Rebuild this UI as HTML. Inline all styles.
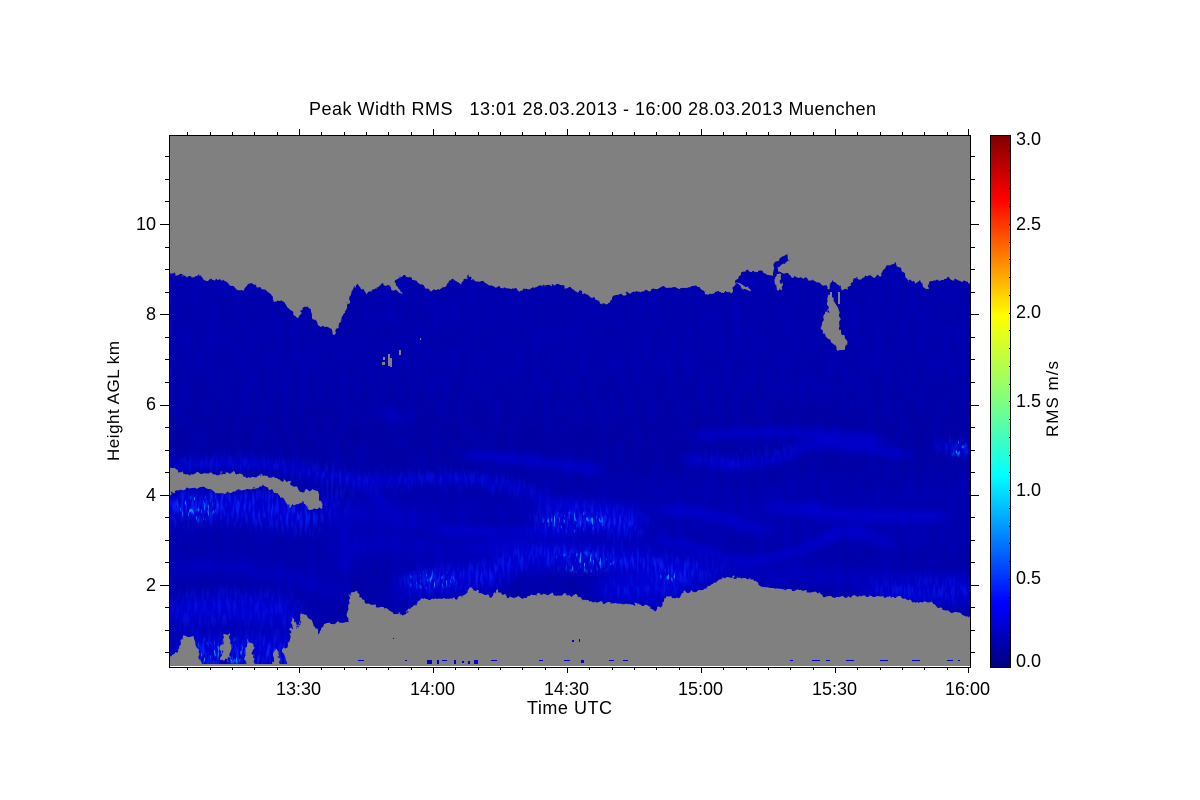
<!DOCTYPE html>
<html>
<head>
<meta charset="utf-8">
<title>Peak Width RMS</title>
<style>
html,body{margin:0;padding:0;background:#fff;width:1200px;height:800px;overflow:hidden}
svg{display:block}
text{font-family:"Liberation Sans",sans-serif;font-size:18px;fill:#000;white-space:pre}
</style>
</head>
<body>
<svg width="1200" height="800" viewBox="0 0 1200 800" xmlns="http://www.w3.org/2000/svg">
<defs>
<linearGradient id="base" x1="0" y1="263" x2="0" y2="666" gradientUnits="userSpaceOnUse">
<stop offset="0" stop-color="#0000ac"/>
<stop offset="0.25" stop-color="#0000aa"/>
<stop offset="0.42" stop-color="#0000a2"/>
<stop offset="0.5" stop-color="#0000a4"/>
<stop offset="0.62" stop-color="#0000b0"/>
<stop offset="0.72" stop-color="#0000a8"/>
<stop offset="0.8" stop-color="#0000a6"/>
<stop offset="1" stop-color="#0000b0"/>
</linearGradient>
<linearGradient id="jet" x1="0" y1="667" x2="0" y2="135" gradientUnits="userSpaceOnUse">
<stop offset="0" stop-color="#00007f"/>
<stop offset="0.12" stop-color="#0000ff"/>
<stop offset="0.36" stop-color="#00ffff"/>
<stop offset="0.5" stop-color="#7fff7f"/>
<stop offset="0.66" stop-color="#ffff00"/>
<stop offset="0.88" stop-color="#ff0000"/>
<stop offset="1" stop-color="#7f0000"/>
</linearGradient>
<filter id="b3" x="-20%" y="-150%" width="140%" height="400%"><feGaussianBlur stdDeviation="7 4"/></filter>
<filter id="b6" x="-20%" y="-60%" width="140%" height="220%"><feGaussianBlur stdDeviation="9 7"/></filter>
<filter id="b2" x="-50%" y="-50%" width="200%" height="200%"><feGaussianBlur stdDeviation="3 2"/></filter>
<filter id="tex" x="0" y="0" width="100%" height="100%" color-interpolation-filters="sRGB">
<feTurbulence type="fractalNoise" baseFrequency="0.12 0.04" numOctaves="2" seed="7"/>
<feColorMatrix type="matrix" values="0 0 0 0 0  0 0 0 0 0  0 0 0 0 0.95  2.5 0 0 0 -1"/>
</filter>
<filter id="tex2" x="0" y="0" width="100%" height="100%" color-interpolation-filters="sRGB">
<feTurbulence type="fractalNoise" baseFrequency="0.38 0.07" numOctaves="2" seed="11"/>
<feColorMatrix type="matrix" values="0 0 0 0 0.04  0 0 0 0 0.16  0 0 0 0 1  4 0 0 0 -1.8"/>
</filter>
<filter id="tex3" x="0" y="0" width="100%" height="100%" color-interpolation-filters="sRGB">
<feTurbulence type="fractalNoise" baseFrequency="0.5 0.12" numOctaves="2" seed="23"/>
<feColorMatrix type="matrix" values="0 0 0 0 0.05  0 0 0 0 0.6  0 0 0 0 1  8 0 0 0 -4.9"/>
</filter>
<filter id="jag" x="-2%" y="-10%" width="104%" height="120%" color-interpolation-filters="sRGB">
<feTurbulence type="fractalNoise" baseFrequency="0.22 0.18" numOctaves="2" seed="4" result="n"/>
<feDisplacementMap in="SourceGraphic" in2="n" scale="7" xChannelSelector="R" yChannelSelector="G"/>
</filter>
<clipPath id="plot"><rect x="169" y="135" width="801" height="531"/></clipPath>
<mask id="m1" maskUnits="userSpaceOnUse" x="169" y="250" width="801" height="420">
<g fill="none" stroke="#fff" stroke-linecap="round" filter="url(#b6)">
<path stroke-width="30" stroke-opacity=".75" d="M172 508C210 502 250 505 310 515"/>
<path stroke-width="36" stroke-opacity=".32" d="M185 610C210 606 250 606 285 612"/>
<path stroke-width="26" stroke-opacity=".85" d="M195 654L285 654"/>
<path stroke-width="10" stroke-opacity=".45" d="M169 465C220 462 270 460 310 472S400 480 440 478 520 488 540 494"/>
<path stroke-width="16" stroke-opacity=".85" d="M412 585C440 578 480 578 495 572"/>
<path stroke-width="14" stroke-opacity=".85" d="M505 560C540 555 590 555 640 562S690 575 700 570"/>
<path stroke-width="20" stroke-opacity=".85" d="M545 520C575 515 600 515 630 525"/>
<path stroke-width="12" stroke-opacity=".6" d="M610 590C630 590 650 590 680 585"/>
<path stroke-width="9" stroke-opacity=".6" d="M662 575L720 568"/>
<path stroke-width="16" stroke-opacity=".55" d="M880 590L970 590"/>
<path stroke-width="10" stroke-opacity=".8" d="M945 445L970 452"/>
<path stroke-width="8" stroke-opacity=".4" d="M700 458C720 462 740 464 800 448"/>
<path stroke-width="14" stroke-opacity=".4" d="M330 470L345 510"/>
</g>
</mask>
<mask id="m2" maskUnits="userSpaceOnUse" x="169" y="250" width="801" height="420">
<g fill="#fff" filter="url(#b2)">
<ellipse cx="198" cy="508" rx="20" ry="12"/>
<ellipse cx="430" cy="580" rx="24" ry="8"/>
<ellipse cx="575" cy="522" rx="32" ry="9"/>
<ellipse cx="582" cy="562" rx="32" ry="9"/>
<ellipse cx="208" cy="652" rx="10" ry="12"/>
<ellipse cx="232" cy="652" rx="14" ry="12"/>
<ellipse cx="958" cy="448" rx="8" ry="8"/>
<ellipse cx="668" cy="576" rx="10" ry="5"/>
</g>
</mask>
</defs>

<rect x="169" y="135" width="801" height="531" fill="#808080"/>

<g clip-path="url(#plot)">
<rect x="169" y="250" width="801" height="420" fill="url(#base)"/>
<g fill="none" stroke-linecap="round">
<g filter="url(#b3)" stroke="#0000d4" stroke-width="7">
<path d="M169 465C220 462 270 460 310 472S400 480 440 478 520 488 540 494"/>
<path d="M440 530C480 532 520 535 560 530S610 512 640 520"/>
<path d="M690 458C710 462 730 466 745 464S790 458 800 448 880 450 905 455"/>
<path d="M770 505C785 510 800 512 815 505"/>
<path d="M810 512C850 516 890 518 940 516"/>
<path d="M660 510C700 508 730 520 765 532"/>
<path d="M660 540C690 545 710 552 730 560S800 552 830 536 870 540 890 544"/>
<path d="M660 578C680 574 700 572 720 568"/>
<path d="M940 590C950 590 960 590 970 588"/>
<path d="M940 445C950 448 960 450 970 452"/>
<path d="M540 500C570 505 600 512 630 510"/>
<path d="M470 550C500 540 530 545 560 555"/>
<path d="M345 475C365 485 385 505 400 520"/>
<path d="M385 410L398 420"/>
<path d="M700 436C760 430 820 432 880 440"/>
<path d="M470 455C520 458 560 465 600 470"/>
<path d="M320 495C340 515 350 540 345 570"/>
</g>
<g filter="url(#b6)" stroke="#0000d0" stroke-width="26">
<path d="M172 506C210 502 250 505 300 515"/>
<path d="M180 612C210 606 250 606 285 612"/>
<path d="M410 585C440 578 480 578 500 570"/>
<path d="M505 560C540 555 590 555 640 562S690 575 700 570"/>
<path d="M550 520C575 515 600 515 630 525"/>
<path d="M610 590C630 590 650 590 680 585"/>
<path d="M190 648L285 648"/>
<path d="M880 592L965 590"/>
</g>
<g filter="url(#b6)" stroke="#0000c0" stroke-width="14">
<path d="M169 570C230 560 280 570 340 590"/>
<path d="M300 505C340 512 380 520 430 520"/>
<path d="M340 550C380 540 420 545 460 555"/>
<path d="M700 575C760 572 830 575 900 582 940 585 960 590 970 592"/>
</g>
</g>
<rect x="169" y="250" width="801" height="420" fill="#fff" filter="url(#tex)" opacity=".16"/>
<rect x="169" y="250" width="801" height="420" filter="url(#tex2)" mask="url(#m1)"/>
<rect x="169" y="250" width="801" height="420" filter="url(#tex3)" mask="url(#m2)"/>

<g fill="#808080" filter="url(#jag)">
<polygon points="150,120 990,120 990,283 970,283 967,282 950,278 930,282 927,290 920,282 908,282 903,272 895,264 887,265 880,276 867,277 853,279 848,290 840,288 833,279 828,288 820,283 810,279 800,278 780,273 778,267 790,259 788,253 775,263 773,275 768,273 758,271 742,272 735,282 733,293 717,292 707,295 700,287 660,288 635,292 615,296 605,305 590,296 575,290 555,284 520,290 498,287 483,283 468,276 462,283 450,280 440,290 430,291 417,282 403,274 395,282 402,294 395,290 383,284 373,291 366,293 358,284 352,290 347,307 335,335 327,326 322,327 313,318 308,306 303,310 297,318 283,301 275,301 268,291 250,284 240,292 228,282 213,278 207,282 200,275 187,277 175,275 169,273 150,273"/>
<polygon points="990,617 970,617 937,608 933,603 913,602 900,597 893,598 860,595 833,598 817,593 793,590 763,587 752,579 723,577 713,584 703,590 683,592 680,597 667,598 660,607 655,611 647,605 613,604 583,600 577,595 532,594 527,598 508,597 498,591 490,597 480,593 470,587 463,597 447,599 422,599 413,607 400,615 380,607 365,603 357,590 350,593 347,622 337,623 323,625 320,635 313,623 302,613 298,627 292,617 290,640 283,650 287,664 287,690 990,690"/>
<polygon points="150,468 169,468 190,475 205,472 218,475 222,472 233,473 250,478 263,475 290,482 300,492 317,489 323,507 310,509 303,502 290,507 277,493 263,485 257,488 230,492 217,493 203,487 183,489 169,495 150,495"/>
<polygon points="828,295 834,300 838,308 840,330 848,343 845,350 837,350 835,345 825,335 820,328 827,312"/>
<polygon points="150,690 150,660 170,657 178,650 183,636 192,636 197,647 202,666 202,690"/>
<polygon points="221,652 224,634 229,634 231,652 228,660 223,660"/>
<polygon points="245,668 246,645 249,640 253,645 254,668"/>
<polygon points="273,668 275,648 278,650 280,668"/>
<polygon points="775,276 777,290 782,290 780,275"/>
<polygon points="735,283 748,286 750,292 743,289"/>
</g>
<g fill="#808080" shape-rendering="crispEdges">
<rect x="169" y="664" width="120" height="2"/>
<rect x="388" y="354" width="2" height="12"/><rect x="390" y="358" width="2" height="9"/><rect x="383" y="357" width="2" height="3"/><rect x="382" y="362" width="3" height="3"/><rect x="399" y="350" width="2" height="5"/><rect x="420" y="338" width="1" height="2"/>
<rect x="838" y="292" width="2" height="12"/><rect x="830" y="292" width="2" height="5"/>
</g>
</g>

<g fill="#0000c8" shape-rendering="crispEdges">
<rect x="427" y="660" width="5" height="4"/><rect x="437" y="660" width="2" height="4"/><rect x="442" y="660" width="5" height="1"/><rect x="454" y="660" width="2" height="4"/><rect x="462" y="661" width="2" height="2"/><rect x="468" y="661" width="2" height="3"/><rect x="474" y="660" width="4" height="4"/><rect x="491" y="660" width="6" height="1"/><rect x="539" y="660" width="4" height="1"/><rect x="564" y="660" width="6" height="1"/><rect x="581" y="660" width="3" height="3"/><rect x="609" y="660" width="5" height="1"/><rect x="623" y="660" width="5" height="1"/><rect x="358" y="660" width="6" height="1"/><rect x="405" y="660" width="2" height="1"/><rect x="572" y="640" width="2" height="2"/><rect x="579" y="639" width="1" height="3"/><rect x="393" y="638" width="1" height="1"/><rect x="790" y="660" width="3" height="1"/><rect x="812" y="660" width="8" height="1"/><rect x="826" y="660" width="4" height="1"/><rect x="846" y="660" width="8" height="1"/><rect x="880" y="660" width="8" height="1"/><rect x="912" y="660" width="8" height="1"/><rect x="947" y="660" width="6" height="1"/><rect x="958" y="660" width="2" height="1"/>
</g>

<g stroke="#000" fill="none" stroke-width="1" shape-rendering="crispEdges">
<path d="M169.500 135.500H970.500V667.500H169.500Z"/>
<path d="M187.500 135v-3M210.500 135v-3M232.500 135v-3M254.500 135v-3M277.500 135v-3M299.500 135v-6M321.500 135v-3M344.500 135v-3M366.500 135v-3M388.500 135v-3M411.500 135v-3M433.500 135v-6M455.500 135v-3M478.500 135v-3M500.500 135v-3M522.500 135v-3M545.500 135v-3M567.500 135v-6M589.500 135v-3M612.500 135v-3M634.500 135v-3M656.500 135v-3M679.500 135v-3M701.500 135v-6M723.500 135v-3M746.500 135v-3M768.500 135v-3M790.500 135v-3M813.500 135v-3M835.500 135v-6M857.500 135v-3M880.500 135v-3M902.500 135v-3M924.500 135v-3M947.500 135v-3M968.500 135v-6"/>
<path d="M187.500 667v3M210.500 667v3M232.500 667v3M254.500 667v3M277.500 667v3M299.500 667v6M321.500 667v3M344.500 667v3M366.500 667v3M388.500 667v3M411.500 667v3M433.500 667v6M455.500 667v3M478.500 667v3M500.500 667v3M522.500 667v3M545.500 667v3M567.500 667v6M589.500 667v3M612.500 667v3M634.500 667v3M656.500 667v3M679.500 667v3M701.500 667v6M723.500 667v3M746.500 667v3M768.500 667v3M790.500 667v3M813.500 667v3M835.500 667v6M857.500 667v3M880.500 667v3M902.500 667v3M924.500 667v3M947.500 667v3M968.500 667v6"/>
<path d="M169 156.500h-4M169 179.500h-4M169 201.500h-4M169 224.500h-9M169 247.500h-4M169 269.500h-4M169 292.500h-4M169 314.500h-9M169 337.500h-4M169 359.500h-4M169 382.500h-4M169 405.500h-9M169 427.500h-4M169 450.500h-4M169 472.500h-4M169 495.500h-9M169 517.500h-4M169 540.500h-4M169 562.500h-4M169 585.500h-9M169 607.500h-4M169 630.500h-4M169 652.500h-4"/>
<path d="M971 156.500h4M971 179.500h4M971 201.500h4M971 224.500h8M971 247.500h4M971 269.500h4M971 292.500h4M971 314.500h8M971 337.500h4M971 359.500h4M971 382.500h4M971 405.500h8M971 427.500h4M971 450.500h4M971 472.500h4M971 495.500h8M971 517.500h4M971 540.500h4M971 562.500h4M971 585.500h8M971 607.500h4M971 630.500h4M971 652.500h4"/>
</g>

<rect x="990" y="135" width="20" height="532" fill="url(#jet)"/>
<g stroke="#000" fill="none" stroke-width="1" shape-rendering="crispEdges">
<rect x="990.500" y="135.500" width="20" height="532"/>
<path d="M1009 151.500h2M1009 170.500h2M1009 188.500h2M1009 206.500h2M1009 224.500h2M1009 242.500h2M1009 259.500h2M1009 277.500h2M1009 295.500h2M1009 313.500h2M1009 330.500h2M1009 348.500h2M1009 366.500h2M1009 384.500h2M1009 401.500h2M1009 419.500h2M1009 437.500h2M1009 455.500h2M1009 472.500h2M1009 490.500h2M1009 508.500h2M1009 526.500h2M1009 543.500h2M1009 561.500h2M1009 579.500h2M1009 597.500h2M1009 614.500h2M1009 632.500h2M1009 650.500h2"/>
</g>

<text x="309" y="115" textLength="567" lengthAdjust="spacing">Peak Width RMS   13:01 28.03.2013 - 16:00 28.03.2013 Muenchen</text>

<text x="136" y="230">10</text>
<text x="146" y="320">8</text>
<text x="146" y="410">6</text>
<text x="146" y="501">4</text>
<text x="146" y="591">2</text>

<text x="276" y="695">13:30</text>
<text x="410" y="695">14:00</text>
<text x="544" y="695">14:30</text>
<text x="678" y="695">15:00</text>
<text x="812" y="695">15:30</text>
<text x="945" y="695">16:00</text>
<text x="527" y="714" textLength="85" lengthAdjust="spacing">Time UTC</text>

<text x="1016" y="145">3.0</text>
<text x="1016" y="230">2.5</text>
<text x="1016" y="318">2.0</text>
<text x="1016" y="407">1.5</text>
<text x="1016" y="496">1.0</text>
<text x="1016" y="584">0.5</text>
<text x="1016" y="667">0.0</text>

<text transform="translate(119,461) rotate(-90)" textLength="120" lengthAdjust="spacing" style="font-size:17px">Height AGL km</text>
<text transform="translate(1058,437) rotate(-90)" textLength="76" lengthAdjust="spacing" style="font-size:17px">RMS m/s</text>
</svg>
</body>
</html>
